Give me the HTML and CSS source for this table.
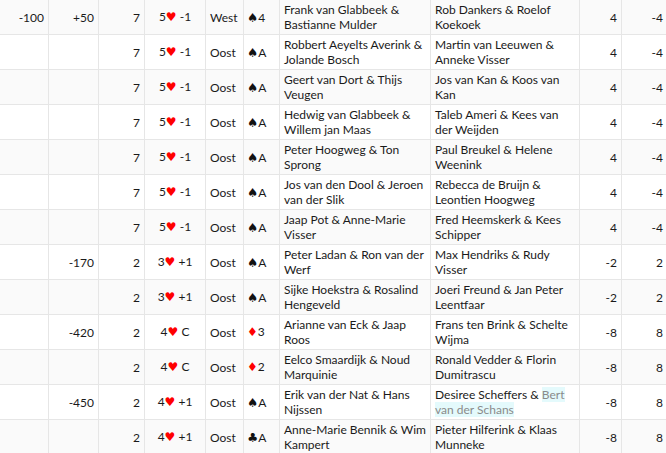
FILE: index.html
```html
<!DOCTYPE html>
<html>
<head>
<meta charset="utf-8">
<link rel="stylesheet" href="styles.css">
</head>
<body>
<table class="scores">
<colgroup>
<col class="c1"><col class="c2"><col class="c3"><col class="c4"><col class="c5"><col class="c6"><col class="c7"><col class="c8"><col class="c9"><col class="c10">
</colgroup>
<tbody>
<tr><td class="num">-100</td><td class="num">+50</td><td class="num">7</td><td class="ctr">5<span class="h">♥</span> -1</td><td>West</td><td class="lead"><span class="s">♠</span>4</td><td>Frank van Glabbeek &amp;<br>Bastianne Mulder</td><td>Rob Dankers &amp; Roelof<br>Koekoek</td><td class="num">4</td><td class="num">-4</td></tr>
<tr><td class="num"></td><td class="num"></td><td class="num">7</td><td class="ctr">5<span class="h">♥</span> -1</td><td>Oost</td><td class="lead"><span class="s">♠</span>A</td><td>Robbert Aeyelts Averink &amp;<br>Jolande Bosch</td><td>Martin van Leeuwen &amp;<br>Anneke Visser</td><td class="num">4</td><td class="num">-4</td></tr>
<tr><td class="num"></td><td class="num"></td><td class="num">7</td><td class="ctr">5<span class="h">♥</span> -1</td><td>Oost</td><td class="lead"><span class="s">♠</span>A</td><td>Geert van Dort &amp; Thijs<br>Veugen</td><td>Jos van Kan &amp; Koos van<br>Kan</td><td class="num">4</td><td class="num">-4</td></tr>
<tr><td class="num"></td><td class="num"></td><td class="num">7</td><td class="ctr">5<span class="h">♥</span> -1</td><td>Oost</td><td class="lead"><span class="s">♠</span>A</td><td>Hedwig van Glabbeek &amp;<br>Willem jan Maas</td><td>Taleb Ameri &amp; Kees van<br>der Weijden</td><td class="num">4</td><td class="num">-4</td></tr>
<tr><td class="num"></td><td class="num"></td><td class="num">7</td><td class="ctr">5<span class="h">♥</span> -1</td><td>Oost</td><td class="lead"><span class="s">♠</span>A</td><td>Peter Hoogweg &amp; Ton<br>Sprong</td><td>Paul Breukel &amp; Helene<br>Weenink</td><td class="num">4</td><td class="num">-4</td></tr>
<tr><td class="num"></td><td class="num"></td><td class="num">7</td><td class="ctr">5<span class="h">♥</span> -1</td><td>Oost</td><td class="lead"><span class="s">♠</span>A</td><td>Jos van den Dool &amp; Jeroen<br>van der Slik</td><td>Rebecca de Bruijn &amp;<br>Leontien Hoogweg</td><td class="num">4</td><td class="num">-4</td></tr>
<tr><td class="num"></td><td class="num"></td><td class="num">7</td><td class="ctr">5<span class="h">♥</span> -1</td><td>Oost</td><td class="lead"><span class="s">♠</span>A</td><td>Jaap Pot &amp; Anne-Marie<br>Visser</td><td>Fred Heemskerk &amp; Kees<br>Schipper</td><td class="num">4</td><td class="num">-4</td></tr>
<tr><td class="num"></td><td class="num">-170</td><td class="num">2</td><td class="ctr">3<span class="h">♥</span> +1</td><td>Oost</td><td class="lead"><span class="s">♠</span>A</td><td>Peter Ladan &amp; Ron van der<br>Werf</td><td>Max Hendriks &amp; Rudy<br>Visser</td><td class="num">-2</td><td class="num">2</td></tr>
<tr><td class="num"></td><td class="num"></td><td class="num">2</td><td class="ctr">3<span class="h">♥</span> +1</td><td>Oost</td><td class="lead"><span class="s">♠</span>A</td><td>Sijke Hoekstra &amp; Rosalind<br>Hengeveld</td><td>Joeri Freund &amp; Jan Peter<br>Leentfaar</td><td class="num">-2</td><td class="num">2</td></tr>
<tr><td class="num"></td><td class="num">-420</td><td class="num">2</td><td class="ctr">4<span class="h">♥</span> C</td><td>Oost</td><td class="lead"><span class="d">♦</span>3</td><td>Arianne van Eck &amp; Jaap<br>Roos</td><td>Frans ten Brink &amp; Schelte<br>Wijma</td><td class="num">-8</td><td class="num">8</td></tr>
<tr><td class="num"></td><td class="num"></td><td class="num">2</td><td class="ctr">4<span class="h">♥</span> C</td><td>Oost</td><td class="lead"><span class="d">♦</span>2</td><td>Eelco Smaardijk &amp; Noud<br>Marquinie</td><td>Ronald Vedder &amp; Florin<br>Dumitrascu</td><td class="num">-8</td><td class="num">8</td></tr>
<tr><td class="num"></td><td class="num">-450</td><td class="num">2</td><td class="ctr">4<span class="h">♥</span> +1</td><td>Oost</td><td class="lead"><span class="s">♠</span>A</td><td>Erik van der Nat &amp; Hans<br>Nijssen</td><td>Desiree Scheffers &amp; <span class="mark">Bert<br>van der Schans</span></td><td class="num">-8</td><td class="num">8</td></tr>
<tr><td class="num"></td><td class="num"></td><td class="num">2</td><td class="ctr">4<span class="h">♥</span> +1</td><td>Oost</td><td class="lead"><span class="s">♣</span>A</td><td>Anne-Marie Bennik &amp; Wim<br>Kampert</td><td>Pieter Hilferink &amp; Klaas<br>Munneke</td><td class="num">-8</td><td class="num">8</td></tr>
</tbody>
</table>
</body>
</html>
```
FILE: styles.css
```css
html, body {
  margin: 0;
  padding: 0;
  overflow: hidden;
  background: #ffffff;
}
body {
  font-family: "Lato", "Noto Sans", sans-serif;
  font-size: 12px;
  letter-spacing: 0;
  color: #1a1a1a;
}
.scores {
  border-collapse: separate;
  border-spacing: 0;
  table-layout: fixed;
  width: 668px;
}
.c1 { width: 49px; }
.c2 { width: 50px; }
.c3 { width: 46px; }
.c4 { width: 61px; }
.c5 { width: 38px; }
.c6 { width: 36px; }
.c7 { width: 151px; }
.c8 { width: 149px; }
.c9 { width: 42px; }
.c10 { width: 46px; }
.scores td {
  box-sizing: border-box;
  height: 35px;
  padding: 0 4px;
  border-right: 1px solid #e6e6e6;
  border-bottom: 1px solid #e6e6e6;
  line-height: 15px;
  vertical-align: middle;
  white-space: nowrap;
  overflow: hidden;
  text-align: left;
}
.scores tr:nth-child(odd) td {
  background: #fafafa;
}
.scores td.num { text-align: right; }
.scores td.ctr { text-align: center; }
.scores td.lead { padding-left: 3px; }
.h, .d {
  color: #ff0000;
  font-family: "DejaVu Sans", sans-serif;
  font-size: 12px;
}
.s {
  color: #111;
  font-family: "DejaVu Sans", sans-serif;
  font-size: 12.5px;
}
.mark {
  background: #e4fafc;
  color: #8a8a8a;
}
```
